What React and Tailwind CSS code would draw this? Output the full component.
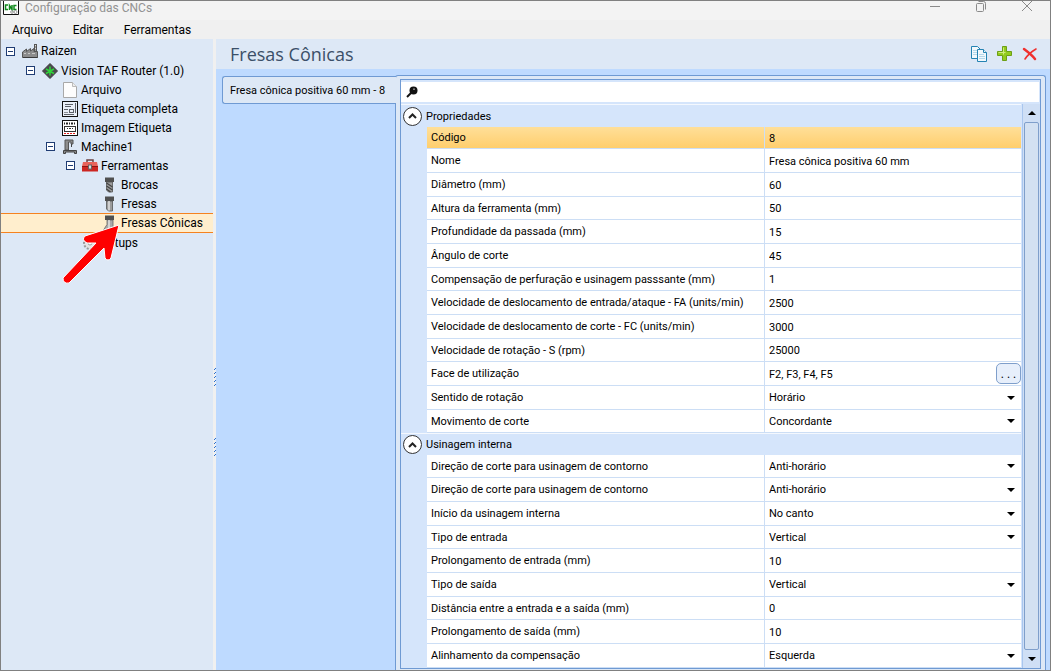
import React, { useState } from 'react';

const groups = [
  {
    title: 'Propriedades',
    rows: [
      { label: 'Código', value: '8', selected: true },
      { label: 'Nome', value: 'Fresa cônica positiva 60 mm' },
      { label: 'Diâmetro (mm)', value: '60' },
      { label: 'Altura da ferramenta (mm)', value: '50' },
      { label: 'Profundidade da passada (mm)', value: '15' },
      { label: 'Ângulo de corte', value: '45' },
      { label: 'Compensação de perfuração e usinagem passsante (mm)', value: '1' },
      { label: 'Velocidade de deslocamento de entrada/ataque - FA (units/min)', value: '2500' },
      { label: 'Velocidade de deslocamento de corte - FC (units/min)', value: '3000' },
      { label: 'Velocidade de rotação - S (rpm)', value: '25000' },
      { label: 'Face de utilização', value: 'F2, F3, F4, F5', type: 'dialog' },
      { label: 'Sentido de rotação', value: 'Horário', type: 'select' },
      { label: 'Movimento de corte', value: 'Concordante', type: 'select' },
    ],
  },
  {
    title: 'Usinagem interna',
    rows: [
      { label: 'Direção de corte para usinagem de contorno', value: 'Anti-horário', type: 'select' },
      { label: 'Direção de corte para usinagem de contorno', value: 'Anti-horário', type: 'select' },
      { label: 'Início da usinagem interna', value: 'No canto', type: 'select' },
      { label: 'Tipo de entrada', value: 'Vertical', type: 'select' },
      { label: 'Prolongamento de entrada (mm)', value: '10' },
      { label: 'Tipo de saída', value: 'Vertical', type: 'select' },
      { label: 'Distância entre a entrada e a saída (mm)', value: '0' },
      { label: 'Prolongamento de saída (mm)', value: '10' },
      { label: 'Alinhamento da compensação', value: 'Esquerda', type: 'select' },
    ],
  },
];

const AppIcon = () => (
  <svg width="16" height="14" viewBox="0 0 16 14" className="shrink-0">
    <path d="M0.500 0v13.500h15V0" fill="#fff" stroke="#111" />
    <path d="M5 4H2.500v4.500H5M6.500 9V4.500L9 8.500V4M13.500 4.500H11v4h2.500" fill="none" stroke="#128a1e" strokeWidth="1.500" />
    <circle cx="9" cy="11" r="1.300" fill="none" stroke="#999" />
    <circle cx="12.500" cy="11" r="1.500" fill="none" stroke="#999" />
  </svg>
);

const FactoryIcon = () => (
  <svg width="16" height="16" viewBox="0 0 16 16" className="shrink-0">
    <path d="M0.500 14.500V9l4-3v2.500l4-3V8l3.500-2.500v3h3.500v6z" fill="#8c8c8c" stroke="#555" />
    <path d="M2 10.500h2M6 10.500h2M10 10.500h3" stroke="#c9c9c9" />
    <path d="M1 14.500h14.500" stroke="#3a3a3a" />
    <rect x="12.500" y="1.500" width="2" height="7" fill="#ddd" stroke="#555" />
    <path d="M12 4h3M12 7h3" stroke="#555" />
  </svg>
);

const RouterIcon = () => (
  <svg width="16" height="16" viewBox="0 0 16 16" className="shrink-0">
    <path d="M8 0.500L15.500 8 8 15.500 0.500 8z" fill="#4a4a4c" stroke="#3a3a3c" strokeLinejoin="round" />
    <path d="M8 3.500v9M4 6l8 4.500M12 6l-8 4.500" stroke="#2fd63a" strokeWidth="1.500" />
  </svg>
);

const PageIcon = () => (
  <svg width="16" height="16" viewBox="0 0 16 16" className="shrink-0">
    <path d="M1.500 0.500h9l4 4v11h-13z" fill="#fdfdfd" stroke="#a9a9a9" />
    <path d="M10.500 0.500v4h4" fill="#eee" stroke="#bbb" />
  </svg>
);

const LabelIcon = () => (
  <svg width="16" height="16" viewBox="0 0 16 16" className="shrink-0">
    <rect x="0.500" y="0.500" width="15" height="15" fill="#eaf0f8" stroke="#111" />
    <path d="M3 3.500h8M3 5.500h6M2 8.500h4M2 13.500h10M13.500 2v10" stroke="#5c6067" />
    <rect x="7.500" y="8.500" width="4" height="3" fill="none" stroke="#5c6067" />
    <path d="M2 11.500h4" stroke="#8d9198" />
  </svg>
);

const ImageLabelIcon = () => (
  <svg width="16" height="16" viewBox="0 0 16 16" className="shrink-0">
    <rect x="0.500" y="0.500" width="15" height="15" fill="#fff" stroke="#111" />
    <path d="M2 3.500h12" stroke="#222" strokeWidth="2" strokeDasharray="1 1 2 1" />
    <rect x="2.500" y="6.500" width="11" height="5" fill="none" stroke="#333" />
    <path d="M5 8.500h1M7 8.500h2M10 8.500h1" stroke="#333" />
    <path d="M2 13.500h12" stroke="#e02020" strokeDasharray="2 1" />
  </svg>
);

const MachineIcon = () => (
  <svg width="16" height="16" viewBox="0 0 16 16" className="shrink-0">
    <path d="M3 11V1h8v4H9V3H6.500v8z" fill="#8d8d8d" stroke="#555" />
    <path d="M9.500 5v3" stroke="#444" />
    <path d="M1.500 14.500v-3h13v3h-2v-1.500h-9v1.500z" fill="#888" stroke="#444" />
  </svg>
);

const ToolboxIcon = () => (
  <svg width="16" height="16" viewBox="0 0 16 16" className="shrink-0">
    <path d="M5 4.500V2h6v2.500" fill="none" stroke="#6b4040" strokeWidth="1.500" />
    <path d="M1 4h14l1 4.500H0z" fill="#e8635b" />
    <path d="M0 8h16v5.500H0z" fill="#cc2622" />
    <path d="M0 8.500h16" stroke="#8d1512" />
    <rect x="6.500" y="7" width="3" height="4" fill="#ddd" stroke="#666" />
  </svg>
);

const BitIcon = ({ kind }) => (
  <svg width="16" height="16" viewBox="0 0 16 16" className="shrink-0">
    {kind === 'cone' ? (
      <path d="M5 5h6v10H1.500L5 9.500z" fill="#a9a9a9" stroke="#666" strokeWidth="0.800" />
    ) : (
      <path d="M4.500 5h6v10h-4l-2-2z" fill="#9c9c9c" stroke="#555" strokeWidth="0.800" />
    )}
    {kind === 'drill' && <path d="M4.500 6l6 4M4.500 9l6 4M4.500 12l4 3" stroke="#444" strokeWidth="1.200" />}
    {kind !== 'drill' && <path d="M7 5v9.500" stroke="#e2e2e2" strokeWidth="1.500" />}
    <rect x="3" y="0.500" width="9" height="4.500" fill="#505050" />
  </svg>
);

const GearIcon = () => (
  <svg width="16" height="16" viewBox="0 0 16 16" className="shrink-0">
    <circle cx="8" cy="8" r="6" fill="#e3e3e3" stroke="#999" strokeWidth="2" strokeDasharray="2 1.500" />
    <circle cx="8" cy="8" r="2" fill="#fff" stroke="#999" />
  </svg>
);

const tree = [
  { label: 'Raizen', icon: <FactoryIcon />, pad: 'pl-[5px]', open: true, root: true },
  { label: 'Vision TAF Router (1.0)', icon: <RouterIcon />, pad: 'pl-[25px]', open: true },
  { label: 'Arquivo', icon: <PageIcon />, pad: 'pl-[45px]' },
  { label: 'Etiqueta completa', icon: <LabelIcon />, pad: 'pl-[45px]' },
  { label: 'Imagem Etiqueta', icon: <ImageLabelIcon />, pad: 'pl-[45px]' },
  { label: 'Machine1', icon: <MachineIcon />, pad: 'pl-[45px]', open: true },
  { label: 'Ferramentas', icon: <ToolboxIcon />, pad: 'pl-[65px]', open: true },
  { label: 'Brocas', icon: <BitIcon kind="drill" />, pad: 'pl-[85px]' },
  { label: 'Fresas', icon: <BitIcon kind="mill" />, pad: 'pl-[85px]' },
  { label: 'Fresas Cônicas', icon: <BitIcon kind="cone" />, pad: 'pl-[85px]', selected: true },
  { label: 'Setups', icon: <GearIcon />, pad: 'pl-[65px]' },
];

const TreeRow = ({ node }) => (
  <li
    className={`flex items-center whitespace-nowrap ${node.pad} ${node.root || node.selected ? 'h-5' : 'h-[19px]'} ${
      node.selected ? 'bg-[#ffeecd] border-y border-[#f5821f]' : ''
    }`}
  >
    {node.open ? (
      <button aria-label={`Recolher ${node.label}`} className="w-[9px] h-[9px] shrink-0 bg-white border border-[#1f3c73] flex items-center justify-center">
        <span className="w-[5px] h-px bg-[#1f3c73]" />
      </button>
    ) : (
      <span className="w-[9px] shrink-0" />
    )}
    <span className="ml-[7px]">{node.icon}</span>
    <span className="ml-[3px]">{node.label}</span>
  </li>
);

const Sidebar = () => (
  <aside className="relative w-[212px] shrink-0 bg-[#dde8f6] pt-[2px] text-[12px] leading-4">
    <ul>
      {tree.map((node) => (
        <TreeRow key={node.label} node={node} />
      ))}
    </ul>
    <svg width="62" height="66" viewBox="0 0 62 66" className="absolute left-[60px] top-[182px]">
      <path
        d="M58 4L50 37Q47 41 44 37L43 27L8 62Q2 63 2 57L35 22L26 22Q20 19 24 15Z"
        fill="#fe0000"
        stroke="#fff"
        strokeLinejoin="round"
      />
    </svg>
  </aside>
);

const Grip = () => (
  <svg width="3" height="20" viewBox="0 0 3 20">
    <path d="M2.500 1v19" stroke="#2a6fd0" strokeDasharray="1 3" />
    <path d="M1.500 2v18" stroke="#2a6fd0" strokeDasharray="1 3" />
  </svg>
);

const Caret = ({ up }) => (
  <svg width="8" height="4" viewBox="0 0 8 4" className="pointer-events-none shrink-0">
    <path d={up ? 'M0 4h8L4 0z' : 'M0 0h8L4 4z'} fill="#000" />
  </svg>
);

const Field = ({ row, id }) => {
  const [value, setValue] = useState(row.value);

  if (row.type === 'select') {
    return (
      <div className="flex items-center pr-[6px]">
        <select id={id} className="flex-1 min-w-0 h-[18px] pt-px appearance-none bg-transparent -mr-2">
          <option>{row.value}</option>
        </select>
        <Caret />
      </div>
    );
  }

  return (
    <div className="flex items-center h-[21px]">
      <input
        id={id}
        value={value}
        onChange={(e) => setValue(e.target.value)}
        className="flex-1 min-w-0 h-[18px] pt-px bg-transparent outline-none"
      />
      {row.type === 'dialog' && (
        <button className="w-[25px] h-[21px] rounded-[5px] border border-[#7f9fcb] bg-[#e7effb] text-[12px] leading-4">
          . . .
        </button>
      )}
    </div>
  );
};

const rowHeight = (row, i) => {
  if (row.selected) return 'h-[22px]';
  return i % 3 === 0 ? 'h-[23px]' : 'h-6';
};

const Group = ({ group, index }) => {
  const [open, setOpen] = useState(true);

  return (
    <tbody>
      <tr className={index === 0 ? 'h-[23px]' : 'h-[22px]'}>
        <th colSpan={3} className="p-0 border-t border-[#f4f8fe] text-left font-normal">
          <div className="flex items-center gap-1 h-[21px] pl-[2px]">
            <button
              onClick={() => setOpen(!open)}
              aria-label={group.title}
              className="w-[19px] h-[19px] shrink-0 rounded-full border border-[#333] bg-white flex items-center justify-center"
            >
              <svg width="9" height="6" viewBox="0 0 9 6">
                <path d="M1 5l3.500-3.500L8 5" fill="none" stroke="#222" strokeWidth="2" />
              </svg>
            </button>
            <span className="pt-px">{group.title}</span>
          </div>
        </th>
      </tr>
      {open &&
        group.rows.map((row, i) => {
          const id = `field-${index}-${i}`;
          const fill = row.selected ? 'bg-linear-to-b from-[#ffdf98] to-[#ffce6c]' : 'bg-white';
          return (
            <tr key={id} className={rowHeight(row, i)}>
              <td className="p-0" />
              <td className={`p-0 pl-1 pt-px border-b border-r border-[#ccdef5] ${fill}`}>
                <label htmlFor={id}>{row.label}</label>
              </td>
              <td className={`p-0 pl-1 border-b border-[#ccdef5] ${fill}`}>
                <Field row={row} id={id} />
              </td>
            </tr>
          );
        })}
    </tbody>
  );
};

const TitleBar = () => (
  <header className="flex items-start justify-between h-[19px] bg-[#f3f3f3] pl-[2px] pr-[17px] text-[#929292]">
    <div className="flex items-center gap-[6px] text-[12px] leading-[14px]">
      <AppIcon />
      <h1>Configuração das CNCs</h1>
    </div>
    <div className="flex h-[11px] gap-[34px]">
      <button aria-label="Minimizar">
        <svg width="12" height="11" viewBox="0 0 12 11"><path d="M1 5.500h10" stroke="#8a8a8a" /></svg>
      </button>
      <button aria-label="Restaurar">
        <svg width="12" height="11" viewBox="0 0 12 11" fill="none" stroke="#8a8a8a">
          <rect x="1.500" y="2.500" width="7" height="8" rx="1" />
          <path d="M3.500 0.500h5q2 0 2 2v6" />
        </svg>
      </button>
      <button aria-label="Fechar">
        <svg width="12" height="11" viewBox="0 0 12 11"><path d="M1 0l10 10M11 0L1 10" stroke="#8a8a8a" /></svg>
      </button>
    </div>
  </header>
);

const Toolbar = () => (
  <div className="flex items-center gap-2">
    <button aria-label="Copiar">
      <svg width="18" height="18" viewBox="0 0 18 18" fill="#f1f8fc" stroke="#2483b3">
        <path d="M1.500 1.500h6l3 3v9h-9z" />
        <path d="M3 5.500h4M3 7.500h5M3 9.500h5" stroke="#b5d8ea" />
        <path d="M7.500 4.500h6l3 3v9h-9z" />
        <path d="M13.500 4.500v3h3" />
        <path d="M9 9.500h5M9 11.500h6M9 13.500h6" stroke="#b5d8ea" />
      </svg>
    </button>
    <button aria-label="Adicionar">
      <svg width="18" height="18" viewBox="0 0 18 18">
        <path d="M6.500 1.500h4v5h5v4h-5v5h-4v-5h-5v-4h5z" fill="#93cb1c" stroke="#6c9f16" />
        <path d="M7.500 9.500v-7M2.500 7.500h7" fill="none" stroke="#cdeb7c" />
      </svg>
    </button>
    <button aria-label="Excluir">
      <svg width="16" height="18" viewBox="0 0 16 18">
        <path d="M2 4c4 3 8 6 11 10" fill="none" stroke="#f0302e" strokeWidth="2.500" strokeLinecap="round" />
        <path d="M14 4C9 7 5 11 3 14" fill="none" stroke="#f0302e" strokeWidth="1.600" strokeLinecap="round" />
      </svg>
    </button>
  </div>
);

const Scrollbar = () => (
  <div className="w-[18px] shrink-0 flex flex-col items-center border-l border-[#a9c6ee] bg-[#cfdff5] py-[7px]">
    <Caret up />
    <div className="w-[15px] flex-1 my-[7px] rounded-[2px] border border-[#7f9fcb] bg-[#d3e1f2]" />
    <Caret />
  </div>
);

const App = () => {
  const [search, setSearch] = useState('');

  return (
    <div className="min-h-screen bg-white pr-[2px] flex flex-col font-['Roboto','Noto_Sans',sans-serif] text-black">
      <div className="flex-1 flex flex-col border border-[#808080]">
        <TitleBar />
        <nav className="flex items-center gap-5 h-[19px] bg-[#f0f0f0] pl-[11px] text-[12px] leading-4">
          <button>Arquivo</button>
          <button>Editar</button>
          <button>Ferramentas</button>
        </nav>
        <div className="flex-1 flex">
          <Sidebar />
          <div className="w-[3px] shrink-0 flex flex-col items-center gap-[50px] bg-[#f0f0f0] pt-[328px]">
            <Grip />
            <Grip />
          </div>
          <main className="flex-1 min-w-0 flex flex-col bg-[#bedaff]">
            <div className="flex items-center justify-between h-[30px] bg-[#dde8f6] pl-[14px] pr-3">
              <h2 className="font-['Open_Sans','Noto_Sans',sans-serif] text-[18px] leading-6 text-[#3b4f68]">Fresas Cônicas</h2>
              <Toolbar />
            </div>
            <div className="flex-1 flex pt-[6px] pl-[6px] pr-1 text-[11px] leading-4">
              <button className="relative z-10 self-start w-[174px] h-[28px] mt-px -mr-px rounded-l-[3px] border border-r-0 border-[#6f9ad3] bg-[#dde8f6] pl-[7px] pt-px text-left whitespace-nowrap">
                Fresa cônica positiva 60 mm - 8
              </button>
              <section className="flex-1 min-w-0 flex flex-col rounded-t-[3px] border border-b-0 border-[#6f9ad3] bg-[#dde8f6] p-1 pt-[3px] pb-px">
                <div className="flex-1 flex flex-col border border-[#6f9ad3] bg-[#d5e5fb]">
                  <div className="flex items-center h-5 mt-[2px] mr-px bg-white pl-[5px] gap-1">
                    <svg width="12" height="12" viewBox="0 0 12 12">
                      <circle cx="7.500" cy="4.500" r="4" fill="#111" />
                      <path d="M5 7l-4 4" stroke="#111" strokeWidth="2" />
                      <path d="M7 3.500q1-1.500 2 0" fill="none" stroke="#bbb" />
                    </svg>
                    <input
                      aria-label="Pesquisar"
                      value={search}
                      onChange={(e) => setSearch(e.target.value)}
                      className="flex-1 h-4 outline-none"
                    />
                  </div>
                  <div className="flex-1 flex mt-[2px]">
                    <div className="flex-1 min-w-0 pr-px">
                      <table className="w-full table-fixed border-separate border-spacing-0">
                        <colgroup>
                          <col className="w-[26px]" />
                          <col className="w-[338px]" />
                          <col />
                        </colgroup>
                        {groups.map((group, i) => (
                          <Group key={group.title} group={group} index={i} />
                        ))}
                      </table>
                    </div>
                    <Scrollbar />
                  </div>
                </div>
              </section>
            </div>
          </main>
        </div>
      </div>
    </div>
  );
};

export default App;
